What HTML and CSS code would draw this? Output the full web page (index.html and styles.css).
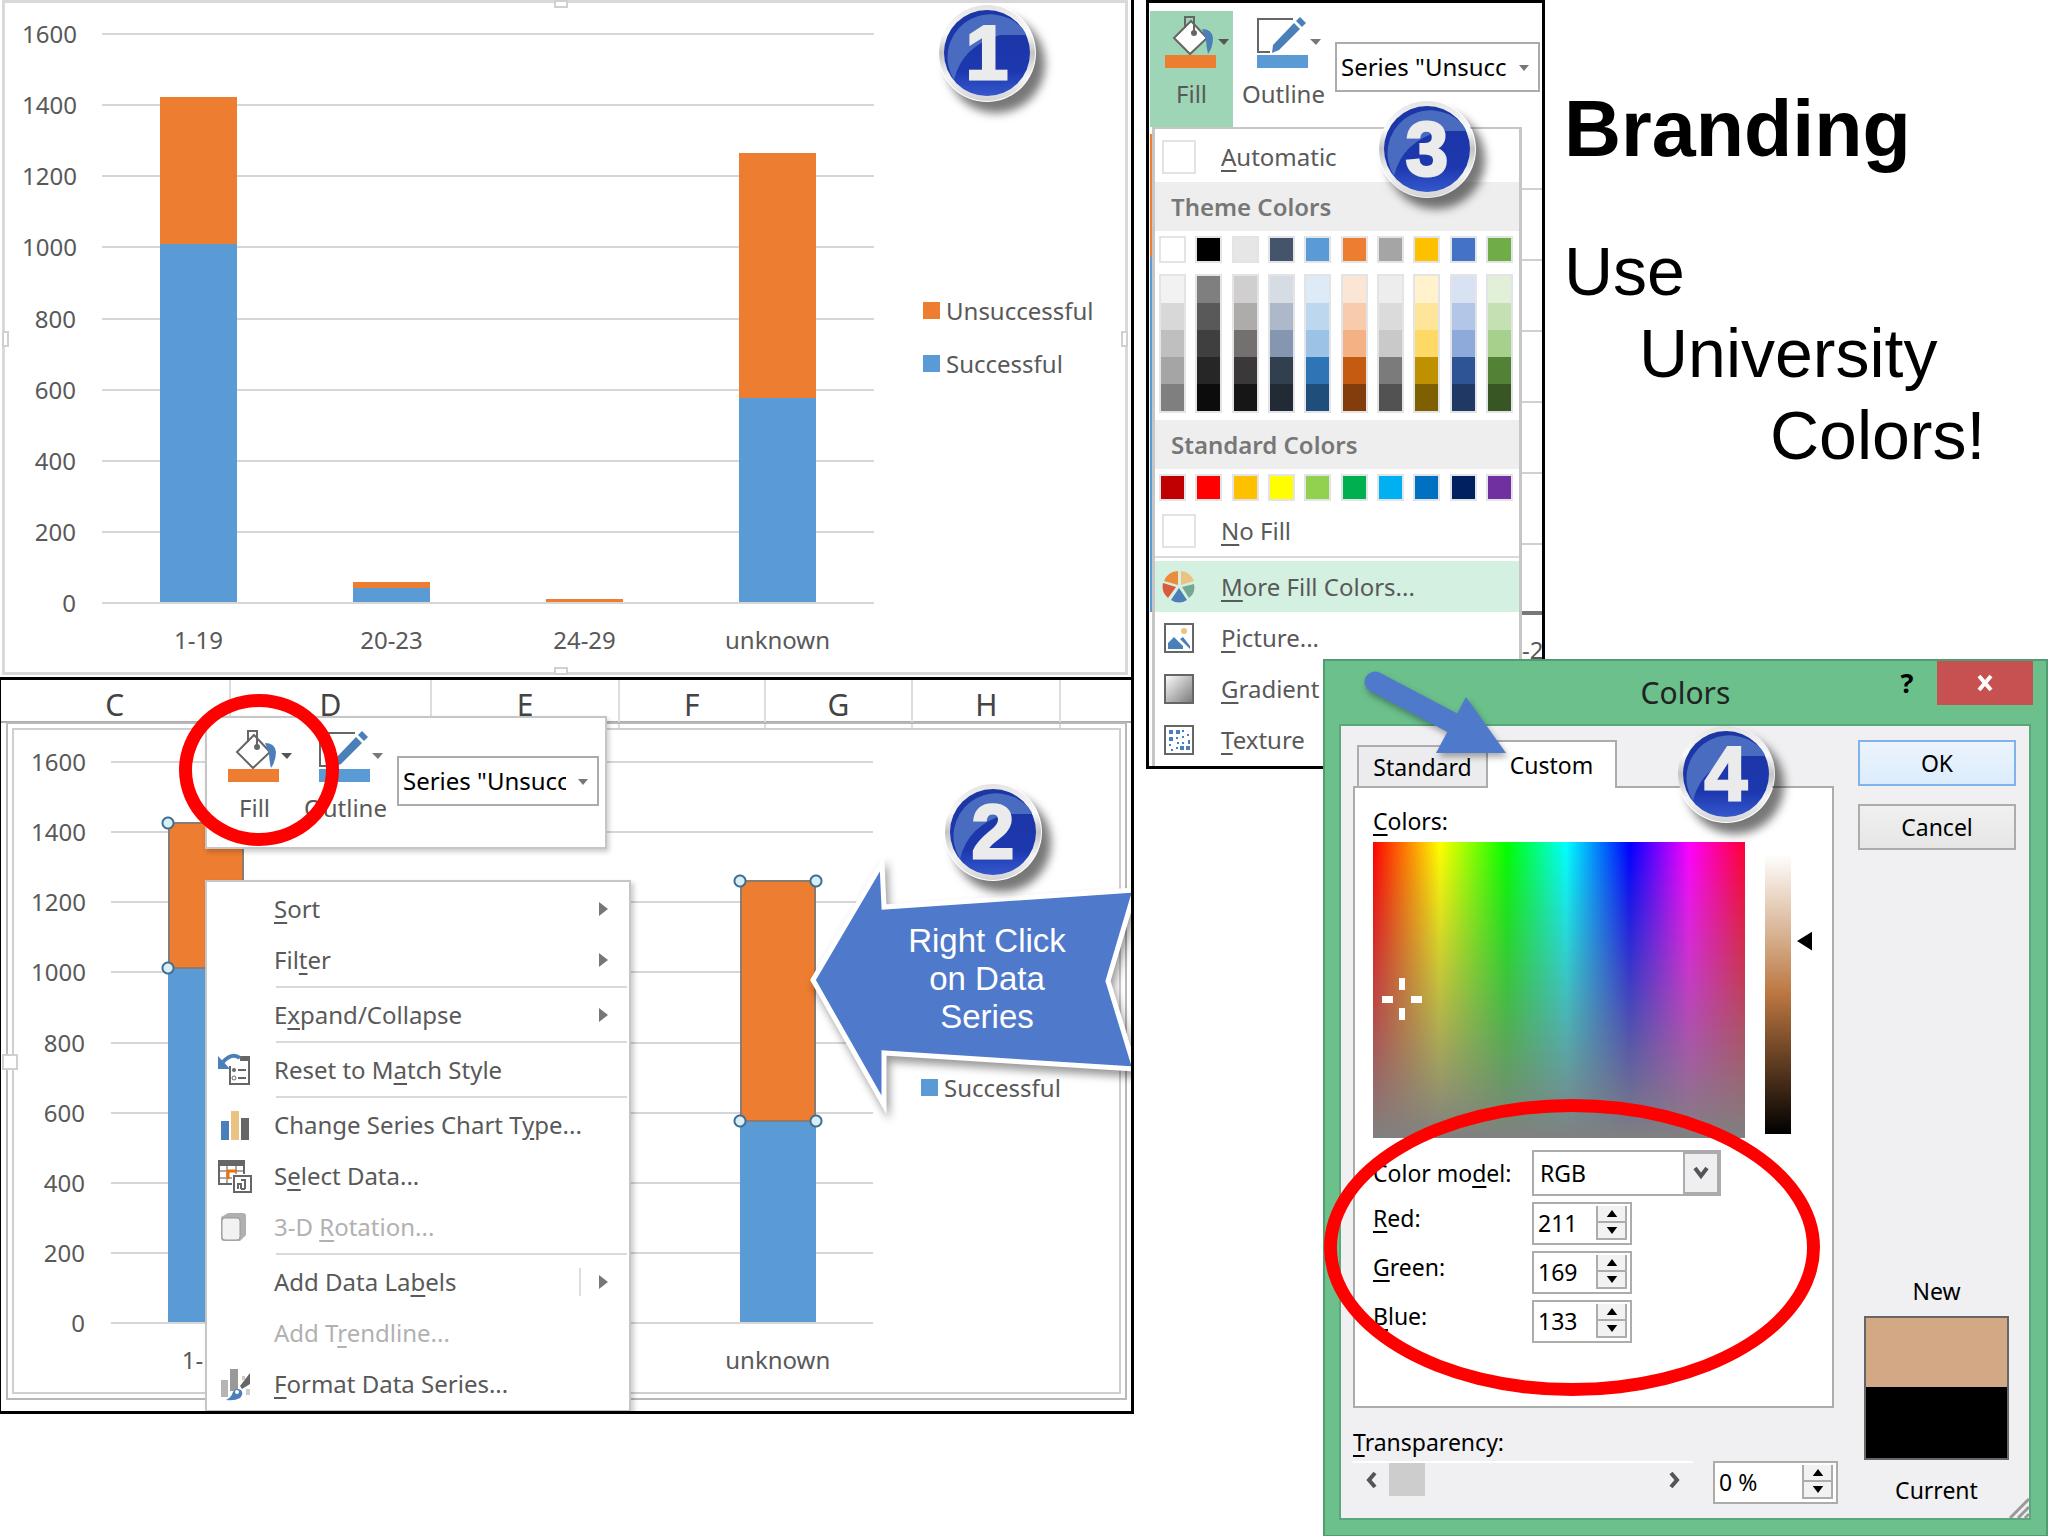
FILE: index.html
```html
<!DOCTYPE html>
<html lang="en">
<head>
  <meta charset="utf-8">
  <meta name="viewport" content="width=device-width, initial-scale=1">
  <title>Branding - Use University Colors!</title>
  <link rel="stylesheet" href="styles.css">
</head>
<body>
  <!-- Shared icons -->
  <svg class="defs" width="0" height="0" aria-hidden="true">
    <defs>
      <linearGradient id="rim" x1="0" y1="0" x2="0" y2="1">
        <stop offset="0" stop-color="#e4e4e4"/>
        <stop offset="0.3" stop-color="#fafafa"/>
        <stop offset="0.5" stop-color="#c4c4c4"/>
        <stop offset="0.75" stop-color="#f4f4f4"/>
        <stop offset="1" stop-color="#d4d4d4"/>
      </linearGradient>
      <linearGradient id="ball" x1="0" y1="0" x2="0" y2="1">
        <stop offset="0" stop-color="#1c36a4"/>
        <stop offset="0.7" stop-color="#1d37ae"/>
        <stop offset="1" stop-color="#3558cc"/>
      </linearGradient>
      <linearGradient id="grey" x1="0" y1="0" x2="1" y2="1">
        <stop offset="0" stop-color="#fff"/>
        <stop offset="1" stop-color="#777"/>
      </linearGradient>
      <symbol id="i-badge" viewBox="0 0 98 98">
        <circle cx="49" cy="49" r="48" fill="url(#rim)"/>
        <circle cx="49" cy="49" r="43" fill="url(#ball)"/>
        <path d="M16 76A43 43 0 0 1 84 24Q88 29 88 31H62Q24 42 16 76z" fill="#4a6cc0"/>
      </symbol>
      <symbol id="i-fill" viewBox="0 0 64 52">
        <path d="M26 5 42 22 25 38 9 22z" fill="#fff" stroke="#666" stroke-width="2"/>
        <path d="M20 12V1h9v16" fill="none" stroke="#666" stroke-width="2"/>
        <circle cx="29" cy="17" r="3" fill="#666"/>
        <path d="M37 13q10 0 11 9 0 9-5 16-2-8-2-15z" fill="#4a7fba"/>
        <path d="M0 39h51v13H0z" fill="#ed7d31"/>
        <path d="M53 23h11l-5 6z" fill="#555"/>
      </symbol>
      <symbol id="i-outline" viewBox="0 0 64 52">
        <path d="M36 3H1v33h12" fill="none" stroke="#666" stroke-width="2"/>
        <path d="m16 29 21-22 6 6-21 21-7 3z" fill="#4a7fba"/>
        <path d="m39 5 4-4 6 6-4 4z" fill="#4a7fba"/>
        <path d="M0 39h51v13H0z" fill="#5b9bd5"/>
        <path d="M53 23h11l-5 6z" fill="#777"/>
      </symbol>
      <symbol id="i-caret" viewBox="0 0 12 8"><path d="M1 1h10L6 7z"/></symbol>
      <symbol id="i-up" viewBox="0 0 12 8"><path d="M0 8h12L6 0z"/></symbol>
      <symbol id="i-down" viewBox="0 0 12 8"><path d="M0 0h12L6 8z"/></symbol>
    </defs>
  </svg>

  <main class="slide">
    <div class="column">

      <!-- 1: the finished chart -->
      <section class="panel panel-chart" aria-label="Step 1">
        <div class="frame frame-top">
          <i class="grip grip-n"></i><i class="grip grip-s"></i>
          <i class="grip grip-w"></i><i class="grip grip-e"></i>
          <div class="chart">
            <div class="plot">
              <ul class="ticks">
                <li>1600</li><li>1400</li><li>1200</li><li>1000</li><li>800</li>
                <li>600</li><li>400</li><li>200</li><li>0</li>
              </ul>
              <div class="bars">
                <div class="bar"><i class="bad" style="height:26%"></i><i class="good" style="height:63%"></i></div>
                <div class="bar"><i class="bad" style="height:1.1%"></i><i class="good" style="height:2.4%"></i></div>
                <div class="bar"><i class="bad" style="height:0.5%"></i></div>
                <div class="bar"><i class="bad" style="height:43.1%"></i><i class="good" style="height:36%"></i></div>
              </div>
            </div>
            <ul class="legend">
              <li><i class="bad"></i>Unsuccessful</li>
              <li><i class="good"></i>Successful</li>
            </ul>
            <ul class="categories">
              <li>1-19</li><li>20-23</li><li>24-29</li><li>unknown</li>
            </ul>
          </div>
        </div>
        <div class="badge badge-1"><svg><use href="#i-badge"/></svg><b>1</b></div>
      </section>

      <!-- 2: right click on the series -->
      <section class="panel panel-sheet" aria-label="Step 2">
        <div class="sheet-head">
          <span>C</span><span>D</span><span>E</span><span>F</span><span>G</span><span>H</span><span></span>
        </div>
        <div class="frame frame-sheet">
          <i class="grip grip-w"></i>
          <div class="chart">
            <div class="plot">
              <ul class="ticks">
                <li>1600</li><li>1400</li><li>1200</li><li>1000</li><li>800</li>
                <li>600</li><li>400</li><li>200</li><li>0</li>
              </ul>
              <div class="bars">
                <div class="bar"><i class="bad picked" style="height:26.2%"></i><i class="good" style="height:63%"></i></div>
                <div class="bar"><i class="good" style="height:2.4%"></i></div>
                <div class="bar"></div>
                <div class="bar"><i class="bad picked" style="height:43.3%"></i><i class="good" style="height:35.7%"></i></div>
              </div>
            </div>
            <ul class="legend">
              <li><i class="good"></i>Successful</li>
            </ul>
            <ul class="categories">
              <li>1-19</li><li></li><li></li><li>unknown</li>
            </ul>
          </div>
        </div>

        <div class="toolbar floating">
          <button type="button" class="tool"><svg><use href="#i-fill"/></svg><span>Fill</span></button>
          <button type="button" class="tool tool-wide"><svg><use href="#i-outline"/></svg><span>Outline</span></button>
          <div class="combo">
            <select aria-label="Chart element"><option>Series "Unsuccessful"</option></select>
            <svg><use href="#i-caret"/></svg>
          </div>
        </div>
        <i class="ring ring-fill"></i>

        <div class="menu context-menu" role="menu">
          <button type="button" role="menuitem" class="more"><span></span><span><u>S</u>ort</span></button>
          <button type="button" role="menuitem" class="more"><span></span><span>Fil<u>t</u>er</span></button>
          <hr>
          <button type="button" role="menuitem" class="more"><span></span><span>E<u>x</u>pand/Collapse</span></button>
          <hr>
          <button type="button" role="menuitem">
            <svg viewBox="0 0 34 34"><path d="M12 13v18h19V5h-9" fill="none" stroke="#666" stroke-width="2"/><path d="M22 3h10v5H22z" fill="#666"/><path d="M20 17h8M20 25h8" stroke="#666" stroke-width="2"/><circle cx="16" cy="17" r="2" fill="#666"/><circle cx="16" cy="25" r="2" fill="none" stroke="#666"/><path d="M22 5Q14-1 5 9" fill="none" stroke="#4a7fba" stroke-width="4"/><path d="M0 3v13h12z" fill="#4a7fba"/></svg>
            <span>Reset to M<u>a</u>tch Style</span>
          </button>
          <hr>
          <button type="button" role="menuitem">
            <svg viewBox="0 0 34 34"><path d="M3 13h8v19H3z" fill="#4a7fba"/><path d="M13 3h8v29h-8z" fill="#eac282"/><path d="M23 10h8v22h-8z" fill="#666"/></svg>
            <span>Change Series Chart T<u>y</u>pe...</span>
          </button>
          <button type="button" role="menuitem">
            <svg viewBox="0 0 34 34"><path d="M1 2h26v23H1z" fill="#fff"/><path d="M1 12h26M1 19h26M9 7v18M18 7v18" stroke="#aaa" stroke-width="2"/><path d="M15 25H1V2h25v14" fill="none" stroke="#666" stroke-width="2"/><path d="M0 1h27v6H0z" fill="#666"/><path d="M10 20v-8h9" fill="none" stroke="#e8730c" stroke-width="3"/><path d="M14 15h20v19H14z" fill="#fff"/><path d="M16 17h17v16H16z" fill="#fff" stroke="#666" stroke-width="2"/><path d="M20 30v-5h3v5m0-9h4v9m-4 0h4" fill="none" stroke="#666" stroke-width="2"/></svg>
            <span>S<u>e</u>lect Data...</span>
          </button>
          <button type="button" role="menuitem" disabled>
            <svg viewBox="0 0 34 34"><path d="M3 8q0-2 2-2l5-3h15q3 0 3 3v19l-6 6H6q-3 0-3-3z" fill="#b0b0b0"/><rect x="4" y="8" width="18" height="22" rx="3" fill="#f2f2f2" stroke="#999"/></svg>
            <span>3-D <u>R</u>otation...</span>
          </button>
          <hr>
          <button type="button" role="menuitem" class="more split"><span></span><span>Add Data La<u>b</u>els</span></button>
          <button type="button" role="menuitem" disabled><span></span><span>Add T<u>r</u>endline...</span></button>
          <button type="button" role="menuitem">
            <svg viewBox="0 0 34 34"><path d="M3 13h7v17H3z" fill="#b5b5b5"/><path d="M12 2h8v22h-8z" fill="#999"/><path d="M32 6v11l-8 5-2-3z" fill="#666"/><path d="M24 9h3v4h-3zM28 22h4v6h-4z" fill="#ccc"/><path d="M8 33q5-2 7-8 3-5 8-2 3 4-1 8-5 3-14 2z" fill="#4a7fba"/><circle cx="19" cy="25" r="2" fill="#fff"/></svg>
            <span><u>F</u>ormat Data Series...</span>
          </button>
        </div>

        <div class="callout">
          <svg viewBox="0 0 330 260"><path d="M8 127 77 10 79 54 330 37 303 128 330 216 79 200 79 252z" fill="#4f7acb" stroke="#fff" stroke-width="5"/></svg>
          <p>Right Click<br>on Data<br>Series</p>
        </div>
        <div class="badge badge-2"><svg><use href="#i-badge"/></svg><b>2</b></div>
      </section>
    </div>

    <!-- 3: fill palette -->
    <section class="panel panel-palette" aria-label="Step 3">
      <div class="toolbar">
        <button type="button" class="tool active"><svg><use href="#i-fill"/></svg><span>Fill</span></button>
        <button type="button" class="tool tool-wide"><svg><use href="#i-outline"/></svg><span>Outline</span></button>
        <div class="combo">
          <select aria-label="Chart element"><option>Series "Unsuccessful"</option></select>
          <svg><use href="#i-caret"/></svg>
        </div>
      </div>
      <div class="drop-area">
        <i class="strip-left"></i>
        <div class="menu palette">
          <button type="button"><i class="box"></i><span><u>A</u>utomatic</span></button>
          <h2>Theme Colors</h2>
          <div class="swatches">
            <button type="button" aria-label="White" style="background:#ffffff"></button>
            <button type="button" aria-label="Black" style="background:#000000"></button>
            <button type="button" aria-label="Light grey" style="background:#e7e6e6"></button>
            <button type="button" aria-label="Blue-grey" style="background:#44546a"></button>
            <button type="button" aria-label="Blue" style="background:#5b9bd5"></button>
            <button type="button" aria-label="Orange" style="background:#ed7d31"></button>
            <button type="button" aria-label="Grey" style="background:#a5a5a5"></button>
            <button type="button" aria-label="Gold" style="background:#ffc000"></button>
            <button type="button" aria-label="Royal blue" style="background:#4472c4"></button>
            <button type="button" aria-label="Green" style="background:#70ad47"></button>
          </div>
          <div class="swatches shades">
            <div><i style="background:#f2f2f2"></i><i style="background:#d8d8d8"></i><i style="background:#bfbfbf"></i><i style="background:#a5a5a5"></i><i style="background:#7f7f7f"></i></div>
            <div><i style="background:#7f7f7f"></i><i style="background:#595959"></i><i style="background:#3f3f3f"></i><i style="background:#262626"></i><i style="background:#0c0c0c"></i></div>
            <div><i style="background:#d0cece"></i><i style="background:#aeabab"></i><i style="background:#757070"></i><i style="background:#3a3838"></i><i style="background:#171616"></i></div>
            <div><i style="background:#d6dce4"></i><i style="background:#adb9ca"></i><i style="background:#8496b0"></i><i style="background:#323f4f"></i><i style="background:#222a35"></i></div>
            <div><i style="background:#deebf6"></i><i style="background:#bdd7ee"></i><i style="background:#9cc3e5"></i><i style="background:#2e75b5"></i><i style="background:#1e4e79"></i></div>
            <div><i style="background:#fbe5d5"></i><i style="background:#f7cbac"></i><i style="background:#f4b183"></i><i style="background:#c55a11"></i><i style="background:#833c0b"></i></div>
            <div><i style="background:#ededed"></i><i style="background:#dbdbdb"></i><i style="background:#c9c9c9"></i><i style="background:#7b7b7b"></i><i style="background:#525252"></i></div>
            <div><i style="background:#fff2cc"></i><i style="background:#fee599"></i><i style="background:#ffd965"></i><i style="background:#bf9000"></i><i style="background:#7f6000"></i></div>
            <div><i style="background:#d9e2f3"></i><i style="background:#b4c6e7"></i><i style="background:#8eaadb"></i><i style="background:#2f5496"></i><i style="background:#1f3864"></i></div>
            <div><i style="background:#e2efd9"></i><i style="background:#c5e0b3"></i><i style="background:#a8d08d"></i><i style="background:#538135"></i><i style="background:#375623"></i></div>
          </div>
          <h2>Standard Colors</h2>
          <div class="swatches">
            <button type="button" aria-label="Dark red" style="background:#c00000"></button>
            <button type="button" aria-label="Red" style="background:#ff0000"></button>
            <button type="button" aria-label="Orange" style="background:#ffc000"></button>
            <button type="button" aria-label="Yellow" style="background:#ffff00"></button>
            <button type="button" aria-label="Light green" style="background:#92d050"></button>
            <button type="button" aria-label="Green" style="background:#00b050"></button>
            <button type="button" aria-label="Light blue" style="background:#00b0f0"></button>
            <button type="button" aria-label="Blue" style="background:#0070c0"></button>
            <button type="button" aria-label="Dark blue" style="background:#002060"></button>
            <button type="button" aria-label="Purple" style="background:#7030a0"></button>
          </div>
          <button type="button"><i class="box"></i><span><u>N</u>o Fill</span></button>
          <hr>
          <button type="button" class="hot">
            <svg viewBox="0 0 34 34"><path d="M16 15V1A16 16 0 0 0 2 11z" fill="#ed8b3c"/><path d="M19 15V1a16 16 0 0 1 13 10z" fill="#eac282"/><path d="M14 17 1 13q-2 9 5 15z" fill="#d95b3c"/><path d="m20 17 12-3q2 9-5 14z" fill="#74a892"/><path d="m17 18 8 12q-8 5-16 0z" fill="#4a7fba"/></svg>
            <span><u>M</u>ore Fill Colors...</span>
          </button>
          <button type="button">
            <svg viewBox="0 0 34 34"><path d="M3 3h28v28H3z" fill="#fff" stroke="#666" stroke-width="2"/><circle cx="22" cy="10" r="3" fill="#eac282"/><path d="M6 28v-6l6-6 9 9v3zM18 18l3-2 7 9v3z" fill="#4a7fba"/></svg>
            <span><u>P</u>icture...</span>
          </button>
          <button type="button">
            <svg viewBox="0 0 34 34"><path d="M3 3h28v28H3z" fill="url(#grey)" stroke="#666" stroke-width="2"/></svg>
            <span><u>G</u>radient</span>
          </button>
          <button type="button">
            <svg viewBox="0 0 34 34"><path d="M3 3h28v28H3z" fill="#fff" stroke="#666" stroke-width="2"/><path d="M7 7h4v4H7zm7 0h4v4h-4zm-7 7h4v4H7zm11 9h4v4h-4zm6 0h4v4h-4zM20 7h2v2h-2zm5 4h2v2h-2zm-11 3h2v2h-2zm6-1h2v2h-2zm-5 6h2v2h-2zm5 0h2v2h-2zm6-2h2v2h-2zm0 4h2v-2h-2zM7 21h2v2H7zm2 5h2v2H9zm5-2h2v2h-2z" fill="#4a7fba"/></svg>
            <span><u>T</u>exture</span>
          </button>
        </div>
        <div class="strip-right"><span>-2</span></div>
      </div>
      <div class="badge badge-3"><svg><use href="#i-badge"/></svg><b>3</b></div>
    </section>

    <header class="headline">
      <h1>Branding</h1>
      <p>Use</p>
      <p class="indent-1">University</p>
      <p class="indent-2">Colors!</p>
    </header>

    <!-- 4: custom colour dialog -->
    <section class="dialog" role="dialog" aria-label="Colors">
      <div class="titlebar">
        <span class="title">Colors</span>
        <button type="button" class="help" aria-label="Help">?</button>
        <button type="button" class="close" aria-label="Close"><svg viewBox="0 0 18 18"><path d="m3 2 12 14M15 2 3 16" stroke="#fff" stroke-width="4"/></svg></button>
      </div>
      <div class="client">
        <div class="picker">
          <div class="tabs" role="tablist">
            <button type="button" role="tab">Standard</button>
            <button type="button" role="tab" aria-selected="true">Custom</button>
          </div>
          <div class="tab-panel">
            <p class="label"><u>C</u>olors:</p>
            <div class="color-area">
              <div class="spectrum"><svg class="cross" viewBox="0 0 40 42"><path d="M17 0h6v12h-6zm0 30h6v12h-6zM0 18h11v7H0zm29 0h11v7H29z" fill="#fff"/></svg></div>
              <div class="shade-bar"></div>
              <svg class="pointer" viewBox="0 0 16 20"><path d="M0 10 16 0v20z"/></svg>
            </div>
            <div class="fields">
              <label for="model" class="middle">Color mo<u>d</u>el:</label>
              <div class="combo model">
                <select id="model"><option>RGB</option><option>HSL</option></select>
                <span><svg viewBox="0 0 16 16"><path d="m2 3 6 8 6-8" fill="none" stroke="#555" stroke-width="4"/></svg></span>
              </div>
              <label for="red"><u>R</u>ed:</label>
              <div class="spin"><input id="red" type="text" value="211"><button type="button" aria-label="Increase red"><svg><use href="#i-up"/></svg></button><button type="button" aria-label="Decrease red"><svg><use href="#i-down"/></svg></button></div>
              <label for="green"><u>G</u>reen:</label>
              <div class="spin"><input id="green" type="text" value="169"><button type="button" aria-label="Increase green"><svg><use href="#i-up"/></svg></button><button type="button" aria-label="Decrease green"><svg><use href="#i-down"/></svg></button></div>
              <label for="blue"><u>B</u>lue:</label>
              <div class="spin"><input id="blue" type="text" value="133"><button type="button" aria-label="Increase blue"><svg><use href="#i-up"/></svg></button><button type="button" aria-label="Decrease blue"><svg><use href="#i-down"/></svg></button></div>
            </div>
          </div>
          <label for="alpha" class="alpha-label"><u>T</u>ransparency:</label>
          <div class="alpha">
            <div class="scroller">
              <button type="button" aria-label="Less"><svg viewBox="0 0 14 18"><path d="m11 2-6 7 6 7" fill="none" stroke="#555" stroke-width="4"/></svg></button>
              <input id="alpha" type="range" min="0" max="100" value="0">
              <button type="button" aria-label="More"><svg viewBox="0 0 14 18"><path d="m3 2 6 7-6 7" fill="none" stroke="#555" stroke-width="4"/></svg></button>
            </div>
            <div class="spin spin-wide"><input type="text" value="0 %" aria-label="Transparency percent"><button type="button" aria-label="Increase transparency"><svg><use href="#i-up"/></svg></button><button type="button" aria-label="Decrease transparency"><svg><use href="#i-down"/></svg></button></div>
          </div>
        </div>
        <div class="side">
          <button type="button" class="btn primary">OK</button>
          <button type="button" class="btn">Cancel</button>
          <div class="preview">
            <span>New</span>
            <div class="preview-box"><i class="new"></i><i class="current"></i></div>
            <span>Current</span>
          </div>
        </div>
        <svg class="resize" viewBox="0 0 20 20"><path d="M1 20 20 1M9 20 20 9M16 20l4-4" stroke="#999" stroke-width="3"/></svg>
      </div>
      <svg class="pointer-arrow" viewBox="0 0 150 95"><path d="M12 12 105 61" stroke="#4f7acb" stroke-width="21" stroke-linecap="round"/><path d="m103 27 40 56H73z" fill="#4f7acb"/></svg>
      <i class="ring ring-rgb"></i>
      <div class="badge badge-4"><svg><use href="#i-badge"/></svg><b>4</b></div>
    </section>
  </main>
</body>
</html>
```
FILE: styles.css
```css
* {
  box-sizing: border-box;
}

body {
  margin: 0;
  background: #fff;
  color: #595959;
  font-family: "Noto Sans", "Open Sans", sans-serif;
  font-size: 24px;
  line-height: 32px;
}

ul, p, h1, h2 {
  margin: 0;
  padding: 0;
  list-style: none;
}

i {
  font-style: normal;
}

button, input, select {
  margin: 0;
  padding: 0;
  border: 0;
  border-radius: 0;
  background: none;
  color: inherit;
  font: inherit;
  appearance: none;
}

u {
  text-underline-offset: 4px;
  text-decoration-thickness: 2px;
}

.defs {
  position: absolute;
}

.slide {
  position: relative;
  display: grid;
  grid-template-columns: 1134fr 399fr 491fr;
  column-gap: 12px;
  align-items: start;
  min-height: 100vh;
  overflow: hidden;
}

.panel {
  position: relative;
  border: 0 solid #000;
}

.panel-chart {
  border-width: 0 3px 3px 0;
  padding: 0 3px 2px 2px;
}

.panel-sheet {
  border-width: 0 3px 3px 1px;
  overflow: hidden;
}

.panel-palette {
  border-width: 3px;
  padding: 8px 0 0 1px;
}

/* Charts */
.frame {
  position: relative;
  border: 3px solid #d9d9d9;
}

.frame-top {
  padding: 15px 0 16px 17px;
}

.frame-sheet {
  margin: 5px 10px 17px 11px;
  padding: 16px 0 16px 17px;
  border: 2px solid #d0ced1;
  outline: 2px solid #b9b7ba;
  outline-offset: 4px;
}

.grip {
  position: absolute;
  width: 14px;
  height: 8px;
  border: 2px solid #d0d0d0;
  background: #fff;
}

.grip-n { top: -3px; left: 49%; }
.grip-s { bottom: -3px; left: 49%; }
.grip-w { top: 49%; left: -3px; width: 7px; height: 16px; }
.grip-e { top: 49%; right: -3px; width: 7px; height: 16px; }

.frame-sheet .grip-w {
  left: -12px;
  width: 16px;
}

.chart {
  display: grid;
  grid-template-columns: 1fr 251px;
}

.frame-sheet .chart {
  grid-template-columns: 1fr 246px;
}

.plot {
  display: grid;
}

.plot > * {
  grid-area: 1 / 1;
}

.ticks {
  display: flex;
  flex-direction: column;
  justify-content: space-between;
  height: 601px;
}

.frame-sheet .ticks {
  height: 593px;
}

.ticks li {
  display: grid;
  grid-template-columns: 54px 1fr;
  column-gap: 26px;
  align-items: center;
  text-align: right;
}

.ticks li::after {
  content: "";
  height: 2px;
  background: #d6d6d6;
}

.bars, .categories {
  display: grid;
  grid-template-columns: repeat(4, 1fr);
  margin-left: 80px;
}

.bars {
  margin-top: 16px;
  margin-bottom: 17px;
  isolation: isolate;
}

.bar {
  display: flex;
  flex-direction: column;
  justify-content: flex-end;
  width: 40%;
  margin: 0 auto;
}

.bad { background: #ed7d31; }
.good { background: #5b9bd5; }

.picked {
  position: relative;
  border: 2px solid #8c7b6e;
}

/* Selection handles on the corners of a picked series */
.picked::before, .picked::after {
  content: "";
  position: absolute;
  left: -9px;
  right: -9px;
  height: 14px;
  background:
    radial-gradient(circle at 7px 7px, #d8f0f5 4px, #3f6f94 5px, #3f6f94 6px, transparent 7px),
    radial-gradient(circle at calc(100% - 7px) 7px, #d8f0f5 4px, #3f6f94 5px, #3f6f94 6px, transparent 7px);
}

.picked::before { top: -8px; }
.picked::after { bottom: -8px; }

.categories {
  margin-top: 5px;
  text-align: center;
}

.legend {
  display: grid;
  gap: 21px;
  align-content: center;
  padding: 37px 0 0 49px;
}

.frame-sheet .legend {
  padding-top: 90px;
  padding-left: 48px;
}

.legend li {
  display: flex;
  align-items: center;
  gap: 6px;
}

.legend i {
  width: 17px;
  height: 17px;
}

/* Worksheet column letters */
.sheet-head {
  display: grid;
  grid-template-columns: 230fr 202fr 188fr 146fr 148fr 148fr 70fr;
  height: 43px;
  border-bottom: 2px solid #ababab;
  color: #444;
  font-size: 30px;
  line-height: 50px;
  text-align: center;
}

.sheet-head span {
  border-right: 2px solid #ddd;
}

.sheet-head span:last-child {
  border: 0;
}

/* Mini toolbar */
.toolbar {
  display: flex;
  align-items: flex-start;
  gap: 4px;
}

.floating {
  position: absolute;
  left: 204px;
  top: 36px;
  width: 402px;
  height: 133px;
  padding: 6px 6px 0 6px;
  border: 2px solid #c6c6c6;
  background: #fff;
  box-shadow: 2px 3px 5px #0003;
}

.tool {
  flex: none;
  width: 83px;
  height: 116px;
  padding: 0 0 10px 15px;
  text-align: left;
}

.tool svg {
  display: block;
  width: 64px;
  height: 52px;
  margin-bottom: 10px;
}

.tool span {
  padding-left: 11px;
}

.tool-wide {
  width: 94px;
  padding-left: 5px;
}

.tool-wide span {
  padding-left: 0;
}

.tool-wide svg {
  margin-left: 15px;
}

.active {
  background: #9fd5b7;
}

.combo {
  position: relative;
  flex: 1;
  height: 50px;
  border: 2px solid #ababab;
  background: #fff;
  color: #000;
}

.toolbar .combo {
  margin-top: 32px;
}

.combo select {
  width: 100%;
  height: 100%;
  padding: 0 31px 0 4px;
}

.combo > svg {
  position: absolute;
  right: 8px;
  top: 20px;
  width: 12px;
  height: 8px;
  fill: #777;
}

.floating .tool-wide {
  width: 93px;
  padding-left: 4px;
}

/* Menus */
.menu {
  border: 2px solid #c6c6c6;
  background: #fff;
}

.menu > button {
  display: grid;
  grid-template-columns: 34px 1fr;
  column-gap: 22px;
  align-items: center;
  width: 100%;
  height: 51px;
  padding-left: 11px;
  text-align: left;
}

.menu svg {
  width: 34px;
  height: 34px;
}

.menu hr {
  height: 2px;
  margin: 1px 2px 1px 69px;
  border: 0;
  background: #d9d9d9;
}

.menu > button:disabled {
  color: #b1b1b1;
}

.context-menu {
  position: absolute;
  left: 204px;
  top: 200px;
  width: 426px;
  padding: 1px 0;
  box-shadow: 3px 3px 5px #0003;
}

.menu > .more {
  grid-template-columns: 34px 1fr 30px;
}

.more::after {
  content: "";
  border: 7px solid transparent;
  border-left: 9px solid #777;
  border-right: 0;
  width: 9px;
}

.menu > .split {
  background: linear-gradient(#ddd, #ddd) 372px 50% / 2px 28px no-repeat;
}

/* Callouts, badges and rings */
.callout {
  position: absolute;
  left: 804px;
  top: 173px;
  width: 330px;
  color: #fff;
  font: 33px/38px "Liberation Sans", Arial, sans-serif;
  text-align: center;
}

.callout svg {
  display: block;
  width: 330px;
  height: 260px;
  filter: drop-shadow(3px 6px 4px #0006);
}

.callout p {
  position: absolute;
  inset: 69px 0 auto 34px;
}

.badge {
  position: absolute;
  width: 98px;
  height: 98px;
}

.badge svg {
  width: 98px;
  height: 98px;
  border-radius: 50%;
  box-shadow: 9px 11px 10px #0008;
}

.badge b {
  position: absolute;
  inset: 0;
  color: #ebebeb;
  font: bold 76px/98px "Liberation Sans", Arial, sans-serif;
  text-align: center;
  -webkit-text-stroke: 3px #ebebeb;
}

.badge-1 { left: 938px; top: 4px; }
.badge-2 { left: 943px; top: 103px; }
.badge-3 { left: 229px; top: 97px; }
.badge-4 { left: 352px; top: 64px; }

.ring {
  position: absolute;
  border: 13px solid #f00;
  border-radius: 50%;
}

.ring-fill {
  left: 178px;
  top: 14px;
  width: 160px;
  height: 152px;
}

.ring-rgb {
  left: -1px;
  top: 438px;
  width: 496px;
  height: 297px;
}

/* Palette */
.panel-palette .tool {
  padding-bottom: 12px;
}

.panel-palette .combo {
  margin: 31px 2px 0 0;
}

.drop-area {
  display: flex;
}

.strip-left {
  width: 2px;
  background: linear-gradient(#fff 7px, #ed7d31 7px 130px, #5b9bd5 130px 485px, #fff 485px);
}

.palette {
  flex: 1;
  padding: 2px 0 1px;
  border-width: 2px 3px 0;
}

.menu.palette > button {
  padding-left: 7px;
  column-gap: 25px;
}

.palette h2 {
  height: 49px;
  padding-left: 16px;
  background: #eee;
  color: #777;
  font-size: 24px;
  font-weight: 600;
  line-height: 49px;
}

.box {
  width: 34px;
  height: 34px;
  border: 2px solid #e1e3e6;
}

.menu.palette > .hot {
  background: #d3f0e0;
}

.menu.palette hr {
  margin: 0 0 3px;
}

.swatches {
  display: grid;
  grid-template-columns: repeat(10, 27px);
  justify-content: space-between;
  padding: 5px 6px 0 4px;
}

.swatches button, .shades div {
  height: 27px;
  border: 2px solid #e2e4e7;
}

.shades {
  padding-top: 11px;
  padding-bottom: 7px;
}

.shades div {
  display: grid;
  height: 139px;
}

.swatches + button {
  margin-top: 4px;
}

.strip-right {
  width: 20px;
  padding-top: 507px;
  overflow: hidden;
  background:
    linear-gradient(#777, #777) 0 484px / 100% 4px no-repeat,
    repeating-linear-gradient(transparent 0 61px, #d0d0d0 61px 63px, transparent 63px 71px) 0 0 / 100% 484px no-repeat;
}

/* Headline */
.headline {
  padding: 88px 0 0 7px;
  color: #000;
  font: 68px/82px "Liberation Sans", Arial, sans-serif;
}

.headline h1 {
  margin-bottom: 60px;
  font-size: 79px;
  line-height: 82px;
}

.indent-1 { padding-left: 75px; }
.indent-2 { padding-left: 206px; }

/* Colors dialog */
.dialog {
  position: absolute;
  left: 64.6%;
  right: 0;
  top: 659px;
  padding: 0 15px 15px 14px;
  border: 2px solid #4f9e72;
  background: #6bc08b;
  color: #000;
  font-size: 23px;
}

.titlebar {
  display: grid;
  grid-template-columns: 1fr 60px 96px;
  align-items: start;
  height: 63px;
  margin-right: -2px;
}

.title {
  padding: 12px 0 0 155px;
  color: #222;
  font-size: 30px;
  line-height: 40px;
  text-align: center;
}

.help {
  font-size: 27px;
  font-weight: 700;
  line-height: 44px;
}

.close {
  height: 44px;
  background: #c75050;
}

.close svg {
  width: 18px;
  height: 18px;
}

.client {
  position: relative;
  display: flex;
  gap: 24px;
  padding: 14px 13px 14px 12px;
  border: 2px solid #5ba67a;
  background: #f0eff1;
}

.picker {
  flex: 1;
}

.tabs {
  display: flex;
  align-items: flex-end;
  height: 46px;
  padding-left: 4px;
}

.tabs button {
  width: 131px;
  height: 41px;
  border: 2px solid #acacac;
  border-bottom: 0;
  background: #ececee;
}

.tabs [aria-selected] {
  position: relative;
  z-index: 1;
  width: 129px;
  height: 48px;
  margin-bottom: -2px;
  border-left: 0;
  background: #fff;
}

.tab-panel {
  padding: 17px 20px 63px 18px;
  border: 2px solid #acacac;
  background: #fff;
}

.color-area {
  display: flex;
  align-items: flex-start;
  height: 296px;
  margin-top: 5px;
}

.spectrum {
  position: relative;
  flex: 1;
  height: 296px;
  background:
    linear-gradient(#80808000, #808080),
    linear-gradient(90deg, #f00, #ff0 18%, #0f0 36%, #0ff 52%, #00f 69%, #f0f 85%, #f03);
}

.cross {
  position: absolute;
  left: 9px;
  top: 136px;
  width: 40px;
  height: 42px;
}

.shade-bar {
  width: 26px;
  height: 280px;
  margin: 12px 6px 0 20px;
  background: linear-gradient(#fff, #d3a985 32%, #bb7641 50%, #000);
}

.pointer {
  width: 15px;
  height: 20px;
  margin-top: 89px;
}

.fields {
  display: grid;
  grid-template-columns: 159px 1fr;
  row-gap: 6px;
  margin-top: 12px;
}

.middle {
  align-self: center;
}

.model {
  display: flex;
  width: 189px;
  height: 46px;
}

.model select {
  padding-left: 6px;
}

.model span {
  display: grid;
  place-items: center;
  flex: none;
  width: 36px;
  border: 2px solid #acacac;
  background: #efeff1;
}

.model svg {
  width: 16px;
  height: 16px;
}

.spin {
  display: grid;
  grid-template-columns: 1fr 31px;
  grid-template-rows: 1fr 1fr;
  width: 100px;
  height: 43px;
  padding: 2px 3px 3px 4px;
  border: 2px solid #acacac;
  background: #fff;
}

.spin input {
  grid-row: span 2;
  min-width: 0;
  width: 100%;
}

.spin button {
  display: grid;
  place-items: center;
  border: 2px solid #acacac;
  border-top-width: 0;
  background: #f2f2f3;
}

.spin svg {
  width: 12px;
  height: 7px;
}

.alpha-label {
  display: block;
  margin-top: 18px;
}

.alpha {
  display: flex;
  gap: 20px;
  align-items: flex-start;
  margin: 3px -4px 0 0;
}

.scroller {
  display: flex;
  flex: 1;
  height: 35px;
  border-top: 2px solid #fff;
}

.scroller button {
  width: 36px;
}

.scroller svg {
  width: 14px;
  height: 18px;
}

.scroller input {
  flex: 1;
  min-width: 0;
}

.scroller input::-webkit-slider-thumb {
  appearance: none;
  width: 36px;
  height: 33px;
  background: #cdcdcd;
}

.spin-wide {
  width: 125px;
}

.side {
  display: flex;
  flex-direction: column;
  gap: 18px;
  width: 158px;
}

.btn {
  height: 46px;
  border: 2px solid #acacac;
  background: linear-gradient(#f0f0f0, #e6e6e6);
}

.primary {
  border-color: #7eb4ea;
  background: linear-gradient(#ecf4fc, #dcecfc);
}

.preview {
  display: grid;
  gap: 9px;
  margin: auto 7px -2px 6px;
  text-align: center;
}

.preview-box {
  display: grid;
  grid-template-rows: 69px 71px;
  margin-bottom: 5px;
  border: 2px solid #666;
}

.new { background: #d3a985; }
.current { background: #000; }

.resize {
  position: absolute;
  right: 0;
  bottom: 0;
  width: 20px;
  height: 20px;
}

.pointer-arrow {
  position: absolute;
  z-index: 2;
  left: 38px;
  top: 9px;
  width: 150px;
  height: 95px;
  fill: none;
  filter: drop-shadow(2px 4px 3px #0005);
}
```
